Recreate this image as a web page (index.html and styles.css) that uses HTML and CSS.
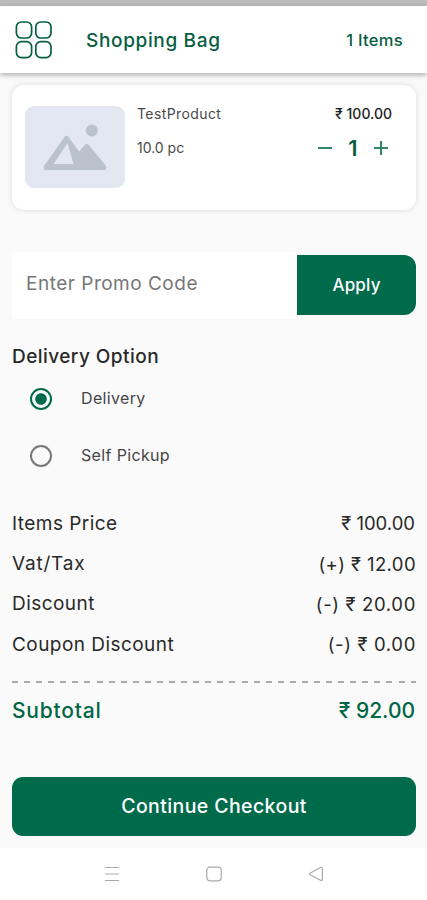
FILE: index.html
```html
<!DOCTYPE html>
<html lang="en">
<head>
<meta charset="utf-8">
<title>Shopping Bag</title>
<link rel="stylesheet" href="styles.css">
</head>
<body>
<div class="status-bar"></div>
<header class="header">
  <svg class="menu-icon" width="37" height="38" viewBox="0 0 37 38" fill="none" stroke="#075e40" stroke-width="1.7">
    <rect x="1.4" y="1" width="15.2" height="16" rx="5"/>
    <rect x="20.8" y="1" width="15.2" height="16" rx="5"/>
    <rect x="1.4" y="20.6" width="15.2" height="16" rx="5"/>
    <rect x="20.8" y="20.6" width="15.2" height="16" rx="5"/>
  </svg>
  <h1 class="title">Shopping Bag</h1>
  <span class="count">1 Items</span>
</header>
<main class="content">
  <section class="product">
    <div class="thumb">
      <svg width="100" height="82" viewBox="0 0 100 82">
        <circle cx="66.8" cy="24.5" r="6" fill="#b9c2cd"/>
        <path d="M21 61.5 41.5 32.5 54 49.5 62 40.5 79 61.5Z" fill="#b9c2cd" stroke="#b9c2cd" stroke-width="5" stroke-linejoin="round"/>
        <path d="M28.5 58 42.5 37 48.5 58Z" fill="#e3e7f1"/>
      </svg>
    </div>
    <div class="product-info">
      <span class="name">TestProduct</span>
      <span class="unit">10.0 pc</span>
    </div>
    <div class="product-side">
      <span class="price">₹ 100.00</span>
      <div class="stepper">
        <svg width="16" height="16" viewBox="0 0 16 16" stroke="#32866a" stroke-width="2"><path d="M1 8H15"/></svg>
        <span class="quantity">1</span>
        <svg width="16" height="16" viewBox="0 0 16 16" stroke="#32866a" stroke-width="2"><path d="M1 8H15M8 1V15"/></svg>
      </div>
    </div>
  </section>

  <section class="promo">
    <div class="promo-input"><span>Enter Promo Code</span></div>
    <div class="apply"><span>Apply</span></div>
  </section>

  <h2 class="section-title">Delivery Option</h2>
  <div class="option"><i class="radio radio-on"></i><span>Delivery</span></div>
  <div class="option"><i class="radio"></i><span>Self Pickup</span></div>

  <section class="summary">
    <div class="row"><span class="label">Items Price</span><span class="value value-total">₹ 100.00</span></div>
    <div class="row"><span class="label label-tax">Vat/Tax</span><span class="value value-tax">(+) ₹ 12.00</span></div>
    <div class="row"><span class="label">Discount</span><span class="value">(-) ₹ 20.00</span></div>
    <div class="row"><span class="label">Coupon Discount</span><span class="value">(-) ₹ 0.00</span></div>
  </section>
  <div class="divider"></div>
  <div class="subtotal"><span class="subtotal-label">Subtotal</span><span class="subtotal-value">₹ 92.00</span></div>
  <div class="checkout"><span>Continue Checkout</span></div>
</main>
<nav class="system-nav">
  <svg width="16" height="16" viewBox="0 0 16 16" fill="none" stroke="#aaa" stroke-width="1.2"><path d="M1 1.5H15M1 8H15M1 14.5H15"/></svg>
  <svg width="16" height="16" viewBox="0 0 16 16" fill="none" stroke="#aaa" stroke-width="1.2"><rect x=".8" y="1.2" width="14.4" height="13.6" rx="3"/></svg>
  <svg width="16" height="16" viewBox="0 0 16 16" fill="none" stroke="#aaa" stroke-width="1.2" stroke-linejoin="round"><path d="M2 7.2 12.4 1.4Q14.4 .8 14.4 2.6V13.2Q14.4 15 12.6 14.3L2 8.8Q1 8 2 7.2Z"/></svg>
</nav>
</body>
</html>
```
FILE: styles.css
```css
* { box-sizing: border-box; }
body {
  margin: 0;
  width: 427px;
  height: 900px;
  overflow: hidden;
  display: flex;
  flex-direction: column;
  background: #fafafa;
  font-family: Inter, "Liberation Sans", sans-serif;
  color: #292929;
  white-space: nowrap;
}
svg { display: block; flex: none; }
.status-bar { height: 6px; background: #bcbcbc; }
.header {
  height: 67px;
  display: flex;
  align-items: center;
  padding: 0 24px 0 15px;
  background: #fff;
  box-shadow: 0 2px 5px rgba(0, 0, 0, .3);
  color: #075e40;
}
.title { margin: 2px 0 0 34px; font-size: 19px; font-weight: 500; letter-spacing: .65px; }
.count { margin-left: auto; font-size: 16.5px; font-weight: 500; letter-spacing: .3px; }
.content { height: 775px; padding: 12px 11px 0 12px; }
.product {
  height: 125px;
  display: flex;
  padding: 21px 24px 0 13px;
  background: #fff;
  border-radius: 12px;
  box-shadow: 0 0 5px 1px rgba(0, 0, 0, .09);
}
.thumb { width: 100px; height: 82px; border-radius: 9px; background: #e3e7f1; overflow: hidden; }
.product-info { margin-left: 12px; display: flex; flex-direction: column; font-size: 14px; line-height: 16px; color: #4a4a4a; }
.name { letter-spacing: .4px; }
.unit { margin-top: 18px; }
.product-side { margin-left: auto; display: flex; flex-direction: column; align-items: flex-end; }
.price { font-size: 14px; line-height: 16px; font-weight: 500; color: #222; }
.stepper { margin: 14px 3px 0 0; display: flex; align-items: center; height: 24px; }
.quantity { width: 40px; text-align: center; font-size: 22px; font-weight: 600; color: #075e40; }
.promo { margin-top: 42px; height: 67px; display: flex; align-items: center; }
.promo-input { width: 285px; height: 67px; padding-left: 14px; background: #fff; font-size: 19px; letter-spacing: .5px; line-height: 64px; color: #777; }
.apply {
  flex: 1;
  height: 60px;
  margin-top: -2px;
  border-radius: 0 12px 12px 0;
  background: #006b4b;
  color: #fff;
  font-size: 17px;
  font-weight: 500;
  letter-spacing: .2px;
  line-height: 60px;
  text-align: center;
}
.section-title { margin: 26px 0 0; font-size: 19px; line-height: 24px; font-weight: 450; letter-spacing: .45px; }
.option { height: 57px; display: flex; align-items: center; padding-left: 18px; font-size: 16px; letter-spacing: .35px; color: #454545; }
.section-title + .option { margin-top: 1px; }
.option span { margin-top: -1px; }
.radio { width: 22px; height: 22px; margin-right: 29px; border: 2px solid #777; border-radius: 50%; }
.radio-on { border-color: #006b4b; background: radial-gradient(circle, #006b4b 5.3px, transparent 6.2px); }
.summary { margin-top: 19px; }
.row { height: 40.4px; display: flex; align-items: center; justify-content: space-between; font-size: 19px; }
.label { letter-spacing: .45px; }
.label-tax { letter-spacing: .8px; }
.value { font-size: 18.5px; letter-spacing: .65px; }
.value-total { margin-right: 1px; letter-spacing: 0; }
.value-tax { letter-spacing: .4px; }
.divider {
  height: 2px;
  margin-top: 16px;
  background: repeating-linear-gradient(90deg, #aaa 0 6px, transparent 6px 12.08px);
}
.subtotal { margin-top: 13px; height: 30px; display: flex; align-items: center; justify-content: space-between; font-size: 21px; font-weight: 500; color: #006744; }
.subtotal-label { letter-spacing: .8px; }
.subtotal-value { margin-right: 1px; }
.checkout {
  height: 59px;
  margin-top: 51px;
  border-radius: 11px;
  background: #006b4b;
  color: #fff;
  font-size: 19.5px;
  font-weight: 500;
  letter-spacing: .4px;
  line-height: 59px;
  text-align: center;
}
.system-nav { height: 52px; background: #fff; display: flex; justify-content: center; gap: 86px; padding-top: 18px; }
```
